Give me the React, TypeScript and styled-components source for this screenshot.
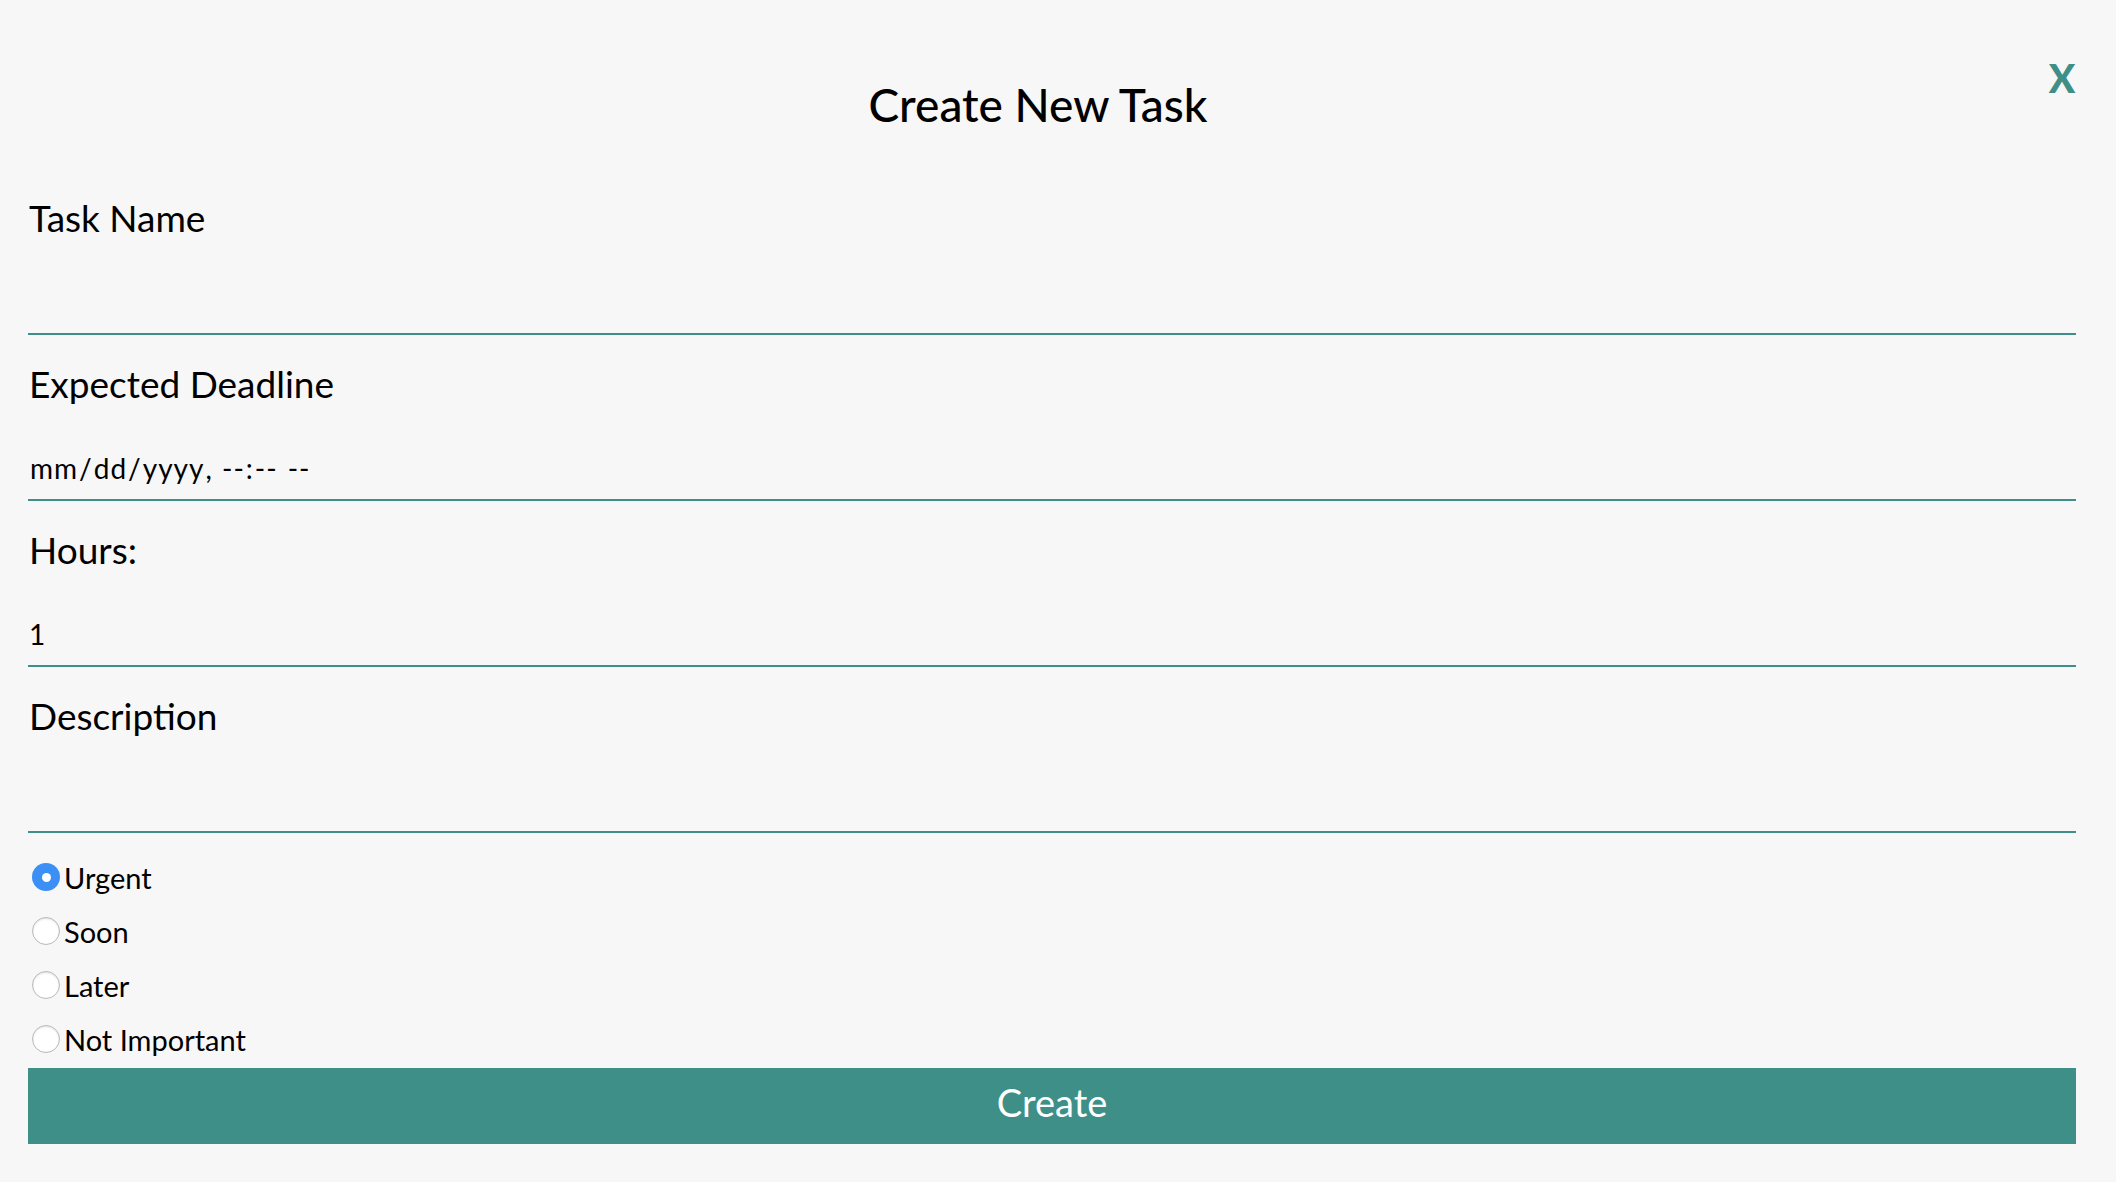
import React from "react";
import styled, { createGlobalStyle } from "styled-components";

const GlobalStyle = createGlobalStyle`
  html, body {
    margin: 0;
    padding: 0;
    background: #f7f7f7;
  }
  * { box-sizing: border-box; }
  body {
    font-family: Lato, "Open Sans", sans-serif;
    color: #000;
  }
`;

const TEAL = "#3e8f88";

const Page = styled.div`
  min-height: 100vh;
  background: #f7f7f7;
  padding: 64px 40px 0 28px;
`;

const Header = styled.div`
  display: flex;
  align-items: flex-start;
  margin-bottom: 61px;
`;

const Title = styled.h1`
  flex: 1;
  margin: 12px 0 0;
  text-align: center;
  font-size: 46px;
  line-height: 58px;
  font-weight: 500;
`;

const CloseButton = styled.button`
  border: none;
  background: none;
  padding: 0;
  margin: 0;
  color: ${TEAL};
  font-family: Lato, sans-serif;
  font-weight: 900;
  font-size: 39px;
  line-height: 28px;
  height: 28px;
  width: 28px;
  display: flex;
  align-items: flex-end;
  justify-content: center;
  cursor: pointer;
`;

const Form = styled.form`
  display: flex;
  flex-direction: column;
`;

const Fields = styled.div`
  display: flex;
  flex-direction: column;
  gap: 26px;
`;

const Field = styled.div`
  display: flex;
  flex-direction: column;
`;

const Label = styled.label`
  font-size: 37px;
  line-height: 46px;
  padding-left: 1px;
`;

const Input = styled.input<{ $spaced?: boolean }>`
  width: 100%;
  height: 94px;
  border: none;
  border-bottom: 2px solid ${TEAL};
  background: transparent;
  outline: none;
  font-family: Lato, sans-serif;
  font-size: 28px;
  line-height: 32px;
  letter-spacing: ${(p) => (p.$spaced ? "1px" : "0")};
  color: #000;
  padding: 45px 0 15px 1px;
  &::-webkit-calendar-picker-indicator {
    display: none;
  }
  &::-webkit-inner-spin-button,
  &::-webkit-outer-spin-button {
    -webkit-appearance: none;
    margin: 0;
  }
`;

const RadioGroup = styled.div`
  display: flex;
  flex-direction: column;
  margin-top: 17px;
`;

const RadioRow = styled.label`
  display: flex;
  align-items: center;
  height: 54px;
  font-size: 29px;
  padding-left: 4px;
  gap: 4px;
`;

const Radio = styled.input`
  appearance: none;
  -webkit-appearance: none;
  margin: 0;
  width: 28px;
  height: 28px;
  border-radius: 50%;
  border: 1.5px solid #b9b9b9;
  background: #fff;
  box-shadow: inset 0 1px 2px rgba(0, 0, 0, 0.12);
  position: relative;
  flex-shrink: 0;
  &:checked {
    border: none;
    background: #3c8ff5;
    box-shadow: none;
  }
  &:checked::after {
    content: "";
    position: absolute;
    left: 50%;
    top: 50%;
    width: 9px;
    height: 9px;
    margin: -4.5px 0 0 -4.5px;
    border-radius: 50%;
    background: #fff;
  }
`;

const SubmitButton = styled.button`
  width: 100%;
  height: 76px;
  margin-top: 2px;
  border: none;
  background: ${TEAL};
  color: #fff;
  font-family: Lato, sans-serif;
  font-size: 38px;
  line-height: 1;
  padding: 0 0 8px;
  cursor: pointer;
`;

const priorities = ["Urgent", "Soon", "Later", "Not Important"];

export default function App() {
  const [priority, setPriority] = React.useState("Urgent");
  const [hours, setHours] = React.useState("1");
  return (
    <>
      <GlobalStyle />
      <Page>
        <Header>
          <Title>Create New Task</Title>
          <CloseButton type="button" aria-label="Close">X</CloseButton>
        </Header>
        <Form onSubmit={(e) => e.preventDefault()}>
          <Fields>
            <Field>
              <Label htmlFor="name">Task Name</Label>
              <Input id="name" type="text" />
            </Field>
            <Field>
              <Label htmlFor="deadline">Expected Deadline</Label>
              <Input id="deadline" type="datetime-local" $spaced />
            </Field>
            <Field>
              <Label htmlFor="hours">Hours:</Label>
              <Input
                id="hours"
                type="number"
                value={hours}
                onChange={(e) => setHours(e.target.value)}
              />
            </Field>
            <Field>
              <Label htmlFor="desc">Description</Label>
              <Input id="desc" type="text" />
            </Field>
          </Fields>
          <RadioGroup>
            {priorities.map((p) => (
              <RadioRow key={p}>
                <Radio
                  type="radio"
                  name="priority"
                  checked={priority === p}
                  onChange={() => setPriority(p)}
                />
                {p}
              </RadioRow>
            ))}
          </RadioGroup>
          <SubmitButton type="submit">Create</SubmitButton>
        </Form>
      </Page>
    </>
  );
}
